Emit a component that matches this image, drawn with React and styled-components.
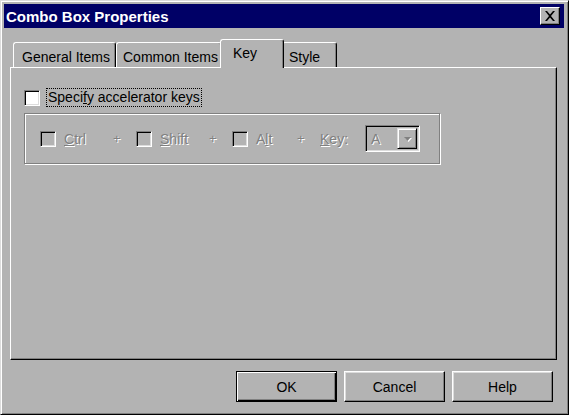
import styled, { createGlobalStyle } from "styled-components";

const Global = createGlobalStyle`
    body {
        margin : 0;
        background : #b3b3b3;
        font-family : "Liberation Sans", Arial, sans-serif;
    }
`;

const Window = styled.div`
    width : 569px;
    height : 415px;
    box-sizing : border-box;
    background : #b3b3b3;
    border : 1px solid;
    border-color : #dcdcdc #000 #000 #dcdcdc;
    box-shadow : inset 1px 1px 0 #fff, inset -1px -1px 0 #808080;
    padding : 3px 3px 2px 3px;
    display : flex;
    flex-direction : column;
`;

const TitleBar = styled.div`
    height : 24px;
    background : #000066;
    color : #fff;
    display : flex;
    align-items : center;
    justify-content : space-between;
    padding : 0 4px 0 2px;
    margin-right : 1px;
    font-weight : bold;
    font-size : 15px;
`;

const CloseBtn = styled.div`
    width : 20px;
    height : 18px;
    box-sizing : border-box;
    background : #b3b3b3;
    border : 1px solid;
    border-color : #fff #000 #000 #fff;
    box-shadow : inset -1px -1px 0 #808080;
    display : flex;
    align-items : center;
    justify-content : center;
`;

const Body = styled.div`
    flex : 1;
    display : flex;
    flex-direction : column;
    padding : 11px 8px 10px 6px;
`;

const TabStrip = styled.div`
    display : flex;
    align-items : flex-end;
    height : 28px;
    padding-left : 3px;
    position : relative;
    z-index : 1;
    font-size : 14px;
`;

const Tab = styled.div`
    width : ${p => p.$w}px;
    height : ${p => p.$active ? 29 : 25}px;
    margin : ${p => p.$active ? "0 -2px -1px -2px" : "0"};
    box-sizing : border-box;
    padding : ${p => p.$active ? 5 : 6}px 0 0 ${p => p.$pl}px;
    background : #b3b3b3;
    border-top : 1px solid #fff;
    border-left : 1px solid #fff;
    border-right : 1px solid #000;
    border-radius : 3px 3px 0 0;
    box-shadow : inset -1px 0 0 #808080;
    color : #000;
    white-space : nowrap;
    position : relative;
    z-index : ${p => p.$active ? 2 : 0};
`;

const Panel = styled.div`
    flex : 1;
    box-sizing : border-box;
    border : 1px solid;
    border-color : #fff #000 #000 #fff;
    box-shadow : inset -1px -1px 0 #808080;
    padding : 20px 13px;
    font-size : 14px;
`;

const CheckRow = styled.div`
    display : flex;
    align-items : center;
    gap : 6px;
    height : 19px;
`;

const Box = styled.div`
    width : 16px;
    height : 16px;
    box-sizing : border-box;
    flex : none;
    background : ${p => p.$disabled ? "#b3b3b3" : "#fff"};
    border : 1px solid;
    border-color : #808080 #fff #fff #808080;
    box-shadow : inset 1px 1px 0 #000, inset -1px -1px 0 #dcdcdc;
`;

const FocusLabel = styled.span`
    border : 1px dotted #000;
    padding : 0 1px;
    line-height : 17px;
    color : #000;
`;

const GroupBox = styled.div`
    width : 416px;
    height : 51px;
    margin-top : 6px;
    box-sizing : border-box;
    border : 1px solid #808080;
    box-shadow : inset 1px 1px 0 #fff, 1px 1px 0 #fff;
    display : flex;
    align-items : center;
    padding-left : 15px;
`;

const Option = styled.div`
    width : ${p => p.$w}px;
    display : flex;
    align-items : center;
    gap : 8px;
`;

const Dim = styled.span`
    color : #808080;
    text-shadow : 1px 1px 0 #fff;
    u { text-decoration : underline; }
`;

const Plus = styled(Dim)`
    width : 24px;
    padding-left : 1px;
    box-sizing : border-box;
    font-size : 13px;
`;

const KeyLabel = styled(Dim)`
    margin-right : 17px;
`;

const Combo = styled.div`
    width : 55px;
    height : 27px;
    box-sizing : border-box;
    border : 1px solid;
    border-color : #808080 #fff #fff #808080;
    box-shadow : inset 1px 1px 0 #000, inset -1px -1px 0 #dcdcdc;
    display : flex;
    align-items : center;
    justify-content : space-between;
    padding : 2px 2px 2px 5px;
`;

const ComboArrow = styled.div`
    width : 20px;
    height : 21px;
    box-sizing : border-box;
    border : 1px solid;
    border-color : #dcdcdc #000 #000 #dcdcdc;
    box-shadow : inset 1px 1px 0 #fff, inset -1px -1px 0 #808080;
    display : flex;
    align-items : center;
    justify-content : center;
`;

const ButtonRow = styled.div`
    display : flex;
    justify-content : flex-end;
    gap : 7px;
    margin-top : 11px;
    padding-right : 4px;
`;

const Button = styled.div`
    width : 101px;
    height : 31px;
    box-sizing : border-box;
    border : 1px solid;
    border-color : ${p => p.$default ? "#000" : "#fff #000 #000 #fff"};
    box-shadow : ${p => p.$default
        ? "inset 1px 1px 0 #fff, inset -1px -1px 0 #000, inset -2px -2px 0 #808080"
        : "inset -1px -1px 0 #808080, inset 1px 1px 0 #dcdcdc"};
    display : flex;
    align-items : center;
    justify-content : center;
    font-size : 14px;
    color : #000;
`;

function App(){
    return (<>
        <Global />
        <Window>
            <TitleBar>
                <span>Combo Box Properties</span>
                <CloseBtn>
                    <svg width="12" height="10" viewBox="0 0 12 10">
                        <path d="M1 0h2l3 3.5L9 0h2L7 5l4 5H9L6 6.5 3 10H1l4-5z" fill="#000" />
                    </svg>
                </CloseBtn>
            </TitleBar>
            <Body>
                <TabStrip>
                    <Tab $w={103} $pl={8}>General Items</Tab>
                    <Tab $w={106} $pl={6}>Common Items</Tab>
                    <Tab $w={64} $pl={12} $active>Key</Tab>
                    <Tab $w={55} $pl={6}>Style</Tab>
                </TabStrip>
                <Panel>
                    <CheckRow>
                        <Box />
                        <FocusLabel>Speci<u>f</u>y accelerator keys</FocusLabel>
                    </CheckRow>
                    <GroupBox>
                        <Option $w={72}><Box $disabled /><Dim><u>C</u>trl</Dim></Option>
                        <Plus>+</Plus>
                        <Option $w={72}><Box $disabled /><Dim><u>S</u>hift</Dim></Option>
                        <Plus>+</Plus>
                        <Option $w={64}><Box $disabled /><Dim>A<u>l</u>t</Dim></Option>
                        <Plus>+</Plus>
                        <KeyLabel><u>K</u>ey:</KeyLabel>
                        <Combo>
                            <Dim>A</Dim>
                            <ComboArrow>
                                <svg width="9" height="6" viewBox="0 0 9 6">
                                    <path d="M1 1h7L4.5 5z" fill="#fff" transform="translate(1 1)" />
                                    <path d="M1 1h7L4.5 5z" fill="#808080" />
                                </svg>
                            </ComboArrow>
                        </Combo>
                    </GroupBox>
                </Panel>
                <ButtonRow>
                    <Button $default>OK</Button>
                    <Button>Cancel</Button>
                    <Button>Help</Button>
                </ButtonRow>
            </Body>
        </Window>
    </>)
}
export default App;
